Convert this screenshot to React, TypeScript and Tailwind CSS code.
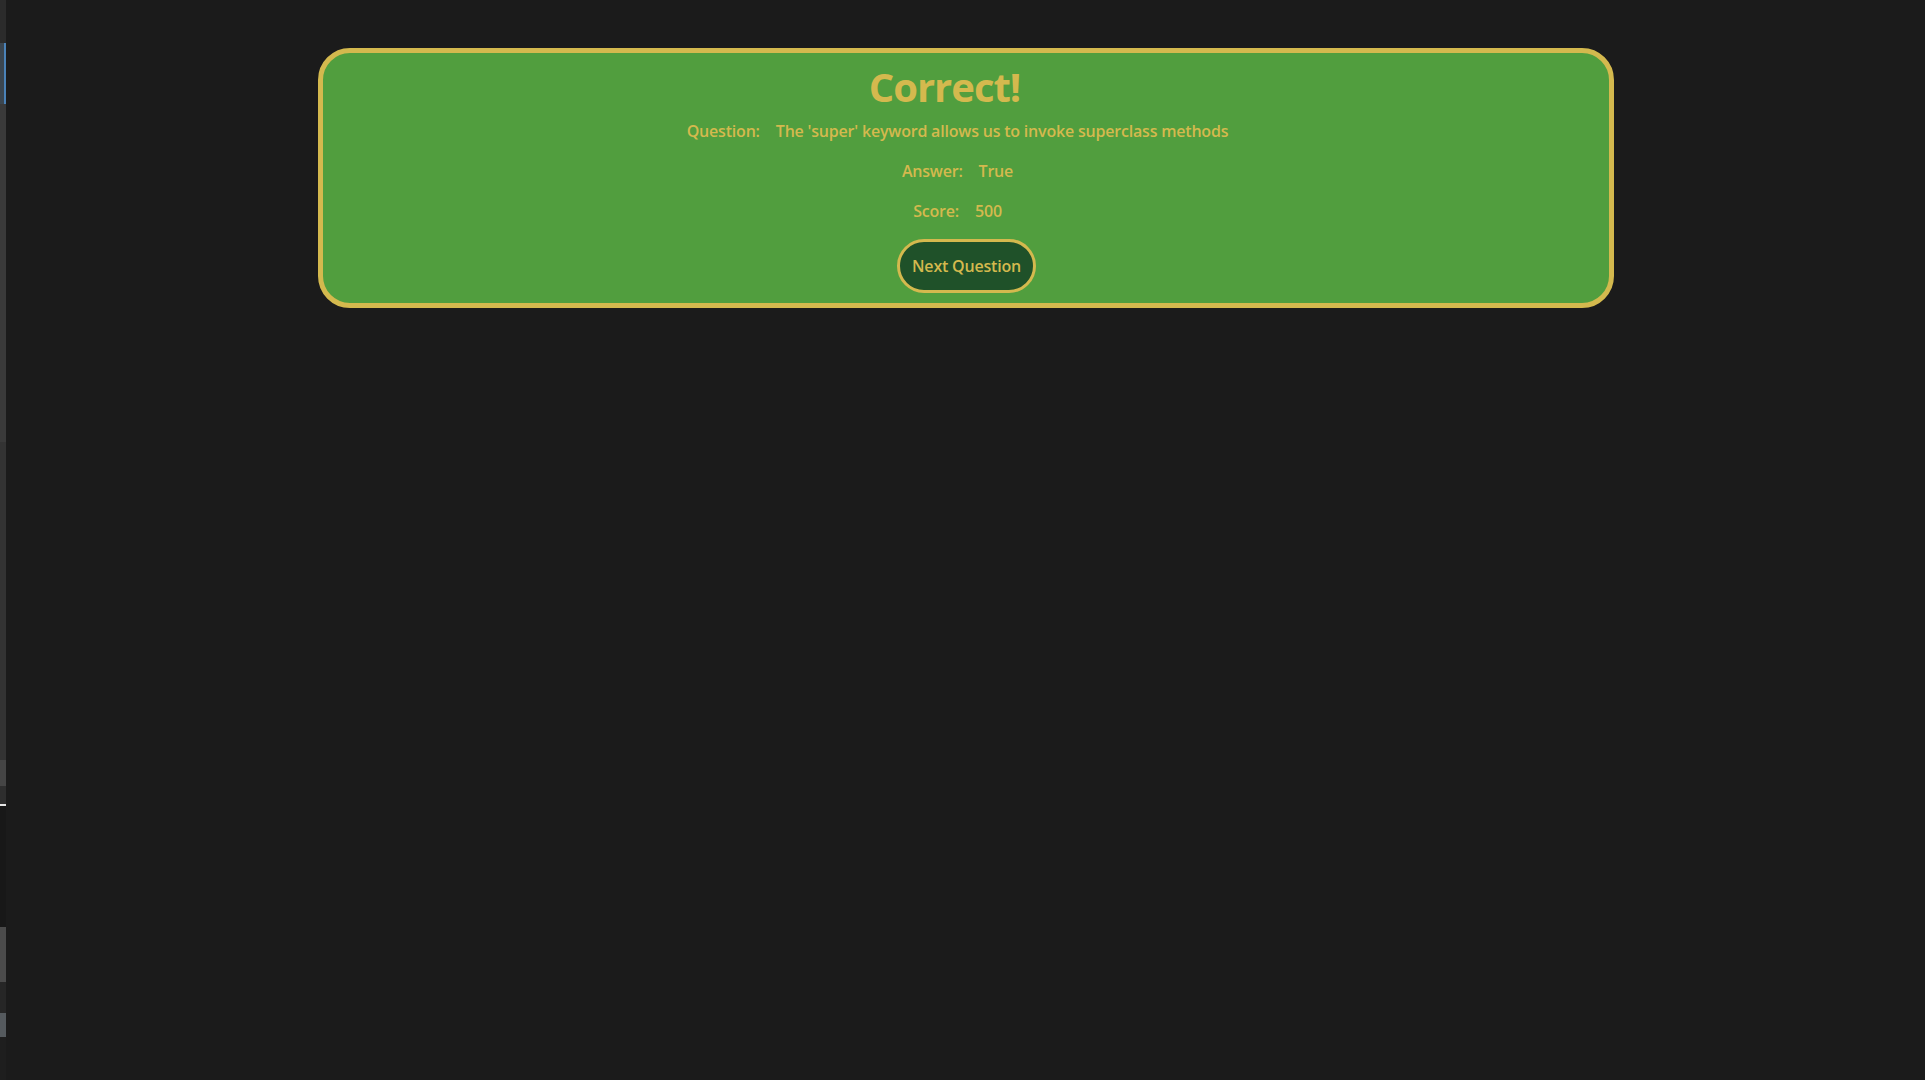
import React from "react";

const font = { fontFamily: "'Open Sans', Lato, sans-serif" };

function SideStrip() {
  return (
    <div className="w-[6px] shrink-0 flex flex-col bg-[#1e1e1e]">
      <div className="h-[43px] bg-[#2b2b2b]" />
      <div className="h-[61px] bg-[#3b4650] border-r-[2px] border-[#4a82b8]" />
      <div className="h-[338px] bg-[#3a3a3a]" />
      <div className="h-[318px] bg-[#333333]" />
      <div className="h-[26px] bg-[#454545]" />
      <div className="h-[18px] bg-[#2e2e2e]" />
      <div className="h-[2px] bg-[#e6e6e6]" />
      <div className="h-[121px] bg-[#181818]" />
      <div className="h-[55px] bg-[#4b4b4b]" />
      <div className="h-[31px] bg-[#262626]" />
      <div className="h-[24px] bg-[#555a5e]" />
      <div className="flex-1 bg-[#1e1e1e]" />
    </div>
  );
}

function Row({ label, value }: { label: string; value: string }) {
  return (
    <p className="flex flex-row items-center gap-[16px] pr-[16px] text-[16px] leading-[20px] font-semibold tracking-[-0.2px] text-[#d4b94e]">
      <span>{label}</span>
      <span>{value}</span>
    </p>
  );
}

export default function App() {
  return (
    <div className="w-full min-h-screen h-[1080px] bg-[#1b1b1b] flex flex-row" style={font}>
      <SideStrip />
      <div className="flex-1 flex flex-col items-center pt-[48px]">
        <div className="w-[1296px] h-[260px] rounded-[32px] border-[5px] border-[#d4b94e] bg-[#519e3e] flex flex-col items-center pt-[10px]">
          <h1 className="text-[40px] leading-[48px] font-bold tracking-[-1px] text-[#d4b94e] pr-[42px]">Correct!</h1>
          <div className="mt-[10px] flex flex-col items-center gap-[20px]">
            <Row label="Question:" value="The 'super' keyword allows us to invoke superclass methods" />
            <Row label="Answer:" value="True" />
            <Row label="Score:" value="500" />
          </div>
          <button className="mt-[18px] ml-[2px] h-[54px] px-[12px] rounded-full border-[3px] border-[#d4b94e] bg-[#1f5129] text-[16px] leading-[20px] font-semibold tracking-[-0.2px] text-[#d4b94e]">
            Next Question
          </button>
        </div>
      </div>
    </div>
  );
}
